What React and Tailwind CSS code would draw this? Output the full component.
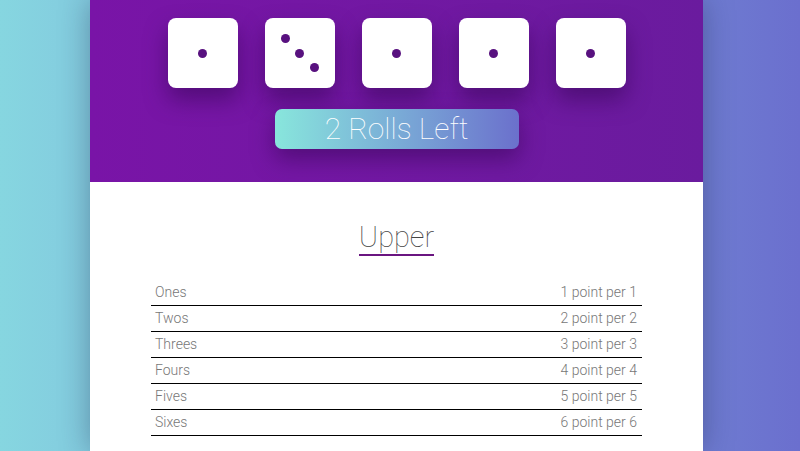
import React from "react";

function Dot() {
  return <div className="w-[9px] h-[9px] rounded-full bg-[#58117f]" />;
}

function Die({ value }) {
  if (value === 3) {
    return (
      <div className="w-[70px] h-[70px] rounded-[8px] bg-white shadow-[0_12px_22px_rgba(55,5,85,0.55)] p-[16px] flex flex-col justify-between">
        <div className="self-start"><Dot /></div>
        <div className="self-center"><Dot /></div>
        <div className="self-end"><Dot /></div>
      </div>
    );
  }
  return (
    <div className="w-[70px] h-[70px] rounded-[8px] bg-white shadow-[0_12px_22px_rgba(55,5,85,0.55)] flex items-center justify-center">
      <Dot />
    </div>
  );
}

const rows = ["Ones", "Twos", "Threes", "Fours", "Fives", "Sixes"];

export default function App() {
  return (
    <div
      className="w-[800px] h-[451px] overflow-hidden bg-gradient-to-r from-[#86d6e0] to-[#6b6fce] pl-[90px]"
      style={{ fontFamily: "Roboto, 'Liberation Sans', sans-serif" }}
    >
      <div className="w-[613px] h-[451px] bg-white shadow-[0_0_28px_rgba(20,30,60,0.35)]">
        <div className="h-[182px] bg-gradient-to-r from-[#7914a7] to-[#6a1b9e] pt-[18px] flex flex-col items-center">
          <div className="flex gap-[27px]">
            {[1, 3, 1, 1, 1].map((v, i) => (
              <Die key={i} value={v} />
            ))}
          </div>
          <div className="mt-[21px] w-[244px] h-[40px] rounded-[7px] bg-gradient-to-r from-[#88e6dc] to-[#6b70cc] shadow-[0_10px_22px_rgba(55,5,85,0.55)] flex items-center justify-center text-white font-thin text-[30px] leading-none">
            2 Rolls Left
          </div>
        </div>
        <div className="pt-[39px] flex flex-col items-center">
          <h2 className="text-[29px] leading-[33px] font-thin text-[#444] border-b-2 border-[#6a1580]">
            Upper
          </h2>
          <div className="mt-[24px] w-[491px]">
            {rows.map((r, i) => (
              <div
                key={r}
                className="h-[26px] border-b border-black flex items-center justify-between pl-[4px] pr-[5px] text-[14px] font-light text-[#777]"
              >
                <span>{r}</span>
                <span>
                  {i + 1} point per {i + 1}
                </span>
              </div>
            ))}
          </div>
        </div>
      </div>
    </div>
  );
}
